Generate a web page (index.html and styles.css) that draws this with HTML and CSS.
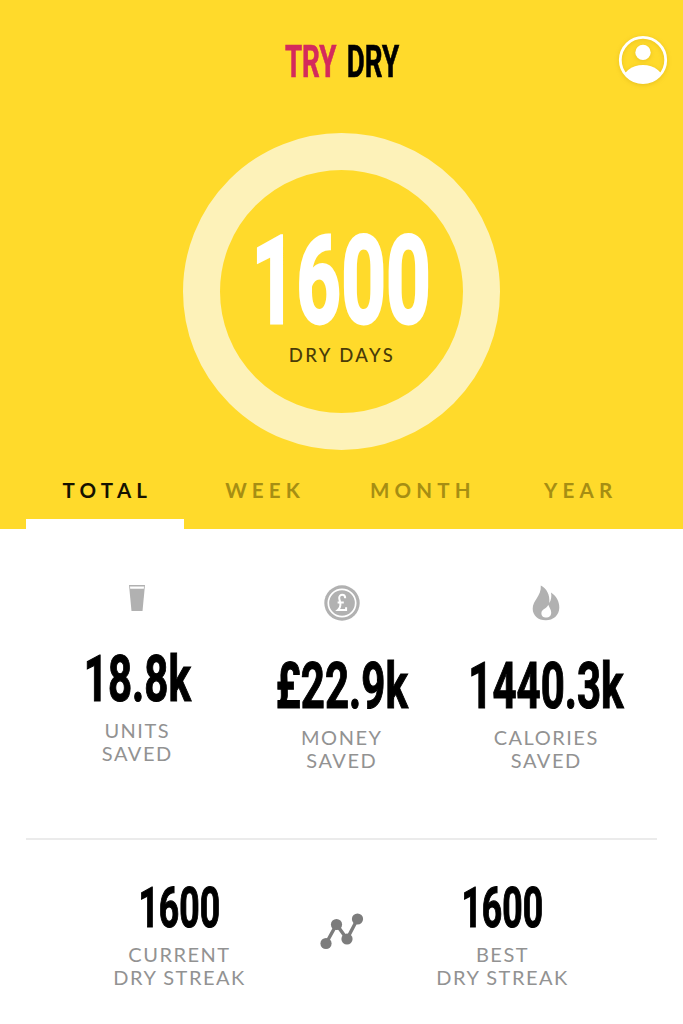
FILE: index.html
```html
<!DOCTYPE html>
<html lang="en">
<head>
<meta charset="utf-8">
<title>Try Dry</title>
<link rel="stylesheet" href="styles.css">
</head>
<body>
<header class="hero">
  <div class="topbar">
    <h1 class="logo condensed"><span class="logo-try">TRY</span> DRY</h1>
    <svg class="profile" viewBox="0 0 50 50" role="img" aria-label="Profile">
      <defs><clipPath id="face"><circle cx="25" cy="25" r="22.5"/></clipPath></defs>
      <circle cx="25" cy="25" r="22.7" fill="none" stroke="#fff" stroke-width="2.8"/>
      <circle cx="25" cy="17.4" r="7.7" fill="#fff"/>
      <ellipse cx="25" cy="47" rx="21" ry="17" fill="#fff" clip-path="url(#face)"/>
    </svg>
  </div>
  <div class="ring">
    <div class="ring-value condensed">1600</div>
    <div class="ring-label">DRY DAYS</div>
  </div>
  <nav class="tabs">
    <a class="tab active">TOTAL</a>
    <a class="tab">WEEK</a>
    <a class="tab">MONTH</a>
    <a class="tab">YEAR</a>
  </nav>
</header>
<main class="content">
  <section class="stats">
    <div class="stat">
      <svg class="icon glass" viewBox="0 0 18 26">
        <path d="M1 0H17L14.5 26H3.5Z" fill="#b1b1b1"/>
        <path d="M2 1.4H16L15.8 3.8H2.2Z" fill="#fff"/>
      </svg>
      <div class="value condensed">18.8k</div>
      <div class="label">UNITS<br>SAVED</div>
    </div>
    <div class="stat">
      <svg class="icon coin" viewBox="0 0 36 36">
        <circle cx="18" cy="18" r="17.7" fill="#b1b1b1"/>
        <circle cx="18" cy="18" r="13.7" fill="none" stroke="#fff" stroke-width="1.7"/>
        <path d="M21.2 13.2C21.2 8.6 15 8.8 15.2 13C15.3 15.2 16.6 17 16.4 20C16.3 22.6 15.5 23.8 14.1 24.9H22.1V22.3M13.6 17.6H19.8" fill="none" stroke="#fff" stroke-width="2"/>
      </svg>
      <div class="value condensed">£22.9k</div>
      <div class="label">MONEY<br>SAVED</div>
    </div>
    <div class="stat">
      <svg class="icon flame" viewBox="0 0 28 36">
        <path fill-rule="evenodd" d="M8.8 .5C14.5 3.5 18.2 9.5 17.3 18C19.2 15.5 19.8 11 19 7.6C24.5 11.2 27.5 17 27.3 22.8C27.1 30.5 21.3 35.3 13.8 35.3C6 35.3 .7 30.5 .7 23.8C.7 15.4 9.5 11 8.8 .5ZM16.2 19.8C15.3 23.7 9.7 23.8 9.4 28C9.2 31 11.4 32.6 14.1 32.6C17 32.6 19.2 30.8 19.2 27.7C19.2 24.3 17.4 23 16.2 19.8Z" fill="#b1b1b1"/>
      </svg>
      <div class="value condensed">1440.3k</div>
      <div class="label">CALORIES<br>SAVED</div>
    </div>
  </section>
  <section class="streaks">
    <div class="streak">
      <div class="streak-value condensed">1600</div>
      <div class="label">CURRENT<br>DRY STREAK</div>
    </div>
    <svg class="chart" viewBox="0 0 44 38">
      <path d="M6 31.5L16.5 12.5L27 27L37.5 7" fill="none" stroke="#7c7c7c" stroke-width="3.4"/>
      <g fill="#7c7c7c"><circle cx="6" cy="31.5" r="5.6"/><circle cx="16.5" cy="12.5" r="5.6"/><circle cx="27" cy="27" r="5.6"/><circle cx="37.5" cy="7" r="5.6"/></g>
    </svg>
    <div class="streak">
      <div class="streak-value condensed">1600</div>
      <div class="label">BEST<br>DRY STREAK</div>
    </div>
  </section>
</main>
</body>
</html>
```

FILE: styles.css
```css
* { box-sizing: border-box; }
body { margin: 0; width: 683px; height: 1024px; overflow: hidden; background: #fff; font-family: Lato, sans-serif; }
.condensed { font-family: Roboto, sans-serif; font-weight: 700; white-space: nowrap; transform: scaleX(.62); color: #000; -webkit-text-stroke: 1.2px currentColor; }
.hero { height: 529px; background: #ffda2b; display: flex; flex-direction: column; align-items: center; }
.topbar { width: 100%; height: 132.5px; padding: 35px 15px 0 16px; display: grid; grid-template-columns: 50px 1fr 50px; }
.logo { grid-column: 2; margin: 0; text-align: center; font-size: 45px; line-height: 53px; word-spacing: 6px; transform: scaleX(.615); -webkit-text-stroke-width: .7px; }
.logo-try { color: #d42a5c; }
.profile { width: 50px; height: 50px; filter: drop-shadow(0 1px 2px rgba(160, 120, 0, .25)); }
.ring { flex: none; width: 317px; height: 317px; border: 37px solid #fdf2b9; border-radius: 50%; display: flex; flex-direction: column; align-items: center; padding-top: 50px; }
.ring-value { color: #fff; font-size: 123px; line-height: 122px; transform: scaleX(.635); -webkit-text-stroke-width: 3px; }
.ring-label { margin-top: 1px; font-size: 18.5px; font-weight: 500; letter-spacing: 2.4px; line-height: 24px; color: #493b08; white-space: nowrap; padding-left: 1px; }
.tabs { width: 631px; flex: 1; display: grid; grid-template-columns: repeat(4, 1fr); }
.tab { padding: 28.5px 0 0 5px; text-align: center; font-size: 20.5px; line-height: 24px; font-weight: 700; letter-spacing: 5.2px; color: #a68e13; }
.tab.active { color: #151200; border-bottom: 10px solid #fff; }
.content { padding: 0 26px; }
.stats { height: 310.5px; padding: 55.5px 9px 0; display: grid; grid-template-columns: repeat(3, 204.5px); border-bottom: 2px solid #ebebeb; }
.stat { display: flex; flex-direction: column; align-items: center; }
.icon { display: block; }
.glass { width: 18px; height: 26px; }
.coin { width: 36px; height: 36px; }
.flame { width: 28px; height: 36px; }
.glass + .value { margin-top: 28px; }
.value { margin-top: 25px; font-size: 65.5px; line-height: 80px; transform: scaleX(.642); }
.label { margin-top: .5px; text-align: center; font-size: 20px; line-height: 23px; letter-spacing: 1.5px; color: #929292; white-space: nowrap; }
.streaks { padding: 33.5px 16px 0; display: grid; grid-template-columns: 275px 48px 275px; }
.streak { display: flex; flex-direction: column; align-items: center; }
.streak .label { margin-top: 0; }
.streak-value { font-size: 56px; line-height: 70px; transform: scaleX(.635); }
.chart { width: 44px; height: 38px; margin-top: 39px; justify-self: center; margin-left: 1px; }
```
